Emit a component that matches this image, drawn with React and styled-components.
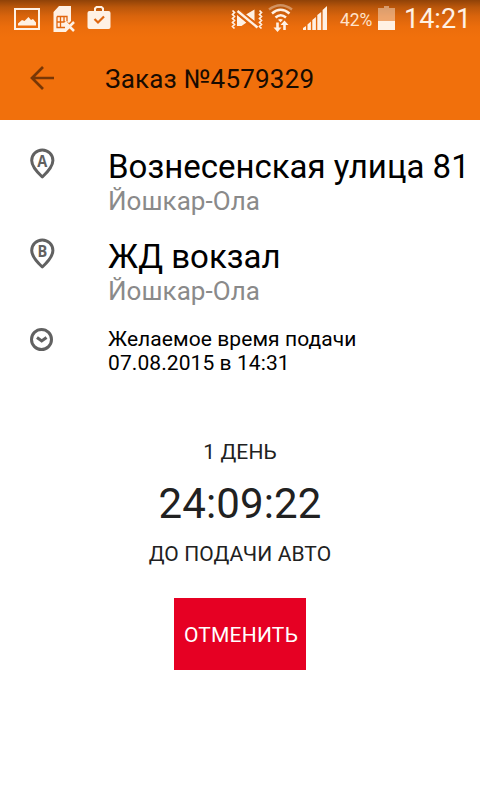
import styled, { createGlobalStyle } from "styled-components";

const GlobalStyle = createGlobalStyle`
  * {
    box-sizing: border-box;
  }

  body {
    margin: 0;
    background-color: #ffffff;
    font-family: Roboto, "Noto Sans", sans-serif;
  }
`;

const Screen = styled.div`
  width: 480px;
  height: 800px;
  overflow: hidden;
  background-color: #ffffff;
`;

const StatusBar = styled.div`
  display: flex;
  justify-content: space-between;
  height: 38px;
  padding: 0 10px 0 13px;
  color: #fff1e4;
  background: linear-gradient(#8f4208 0, #b9560b 7px, #d9640c 16px, #ec6d0c 27px, #f1700c 37px);
`;

const StatusGroup = styled.div`
  display: flex;
  gap: ${(props) => props.$gap || "0"};

  > svg {
    display: block;
    flex: none;
  }
`;

const Percent = styled.span`
  width: 38px;
  margin-left: 11px;
  font-size: 17.5px;
  line-height: 40px;
  letter-spacing: -0.1px;
  color: #ffe3cb;
`;

const Clock = styled.span`
  margin-left: 8px;
  width: 66px;
  font-size: 27px;
  line-height: 38px;
  white-space: nowrap;
`;

const Toolbar = styled.header`
  display: grid;
  grid-template-columns: 105px 1fr;
  align-items: center;
  height: 82px;
  background-color: #f1700c;

  > svg {
    margin-left: 29px;
  }
`;

const Title = styled.h1`
  margin: 0;
  font-size: 26px;
  font-weight: 400;
  line-height: 32px;
  letter-spacing: 0.2px;
  color: #180b01;
`;

const Details = styled.section`
  display: flex;
  flex-direction: column;
  gap: 20px;
  padding-top: 27px;
`;

const Row = styled.div`
  display: grid;
  grid-template-columns: 108px 1fr;

  > svg {
    margin-left: 28px;
  }
`;

const Address = styled.div`
  font-size: 33px;
  line-height: 39px;
  color: #000000;
  white-space: nowrap;
`;

const City = styled.div`
  font-size: 26px;
  line-height: 31px;
  letter-spacing: 0.05px;
  color: #8a8a8a;
`;

const PickupTime = styled.div`
  font-size: 21px;
  line-height: 24px;
  letter-spacing: 0.08px;
  color: #000000;
`;

const Countdown = styled.section`
  display: flex;
  flex-direction: column;
  align-items: center;
  margin-top: 65px;
  color: #212121;
`;

const Caption = styled.div`
  font-size: 21px;
  line-height: 24px;
  letter-spacing: 0.1px;
  text-transform: uppercase;
`;

const Timer = styled.div`
  margin: 15px 0 13px;
  font-size: 42px;
  line-height: 50px;
  letter-spacing: 0.15px;
`;

const CancelButton = styled.button`
  width: 132px;
  height: 72px;
  margin-top: 32px;
  padding: 1px 0 0 2px;
  border: none;
  background-color: #e60023;
  color: #ffffff;
  font-family: inherit;
  font-size: 21px;
  letter-spacing: 0.2px;
  text-transform: uppercase;
  cursor: pointer;
`;

const ImageIcon = () => (
  <svg width="28" height="38" viewBox="13 0 28 38" fill="currentColor">
    <path fillRule="evenodd" d="M14 8h26v22H14zM16 10v18h22v-18z" />
    <path d="M18 25.500v-2l4-3.500 2.500 1 4-4 2.500 3 2-1 3 3.500v3z" />
  </svg>
);

const SimIcon = () => (
  <svg width="24" height="38" viewBox="52 0 24 38">
    <path
      fill="currentColor"
      d="M59 6h12v15l-2 2-2-1-1 2 3 3-3 3v2H53.500V12z"
    />
    <path
      fill="none"
      stroke="#e2660d"
      strokeWidth="1.300"
      d="M57 16.500h10v5M65 27.500h-8v-11M57 22h9M60.500 16.500v11M64 16.500v5"
    />
    <path
      fill="none"
      stroke="currentColor"
      strokeWidth="2.500"
      d="M65 22l9 9M74 22l-9 9"
    />
  </svg>
);

const BagIcon = () => (
  <svg width="24" height="38" viewBox="87 0 24 38">
    <path
      fill="none"
      stroke="currentColor"
      strokeWidth="2"
      d="M95 12V8.500l1.500-1.500h5l1.500 1.500V12"
    />
    <rect x="87.500" y="11" width="23" height="18" rx="2" fill="currentColor" />
    <path
      fill="none"
      stroke="#df660f"
      strokeWidth="2.200"
      d="M94.500 19l3.500 3.500 6-6"
    />
  </svg>
);

const MutedIcon = () => (
  <svg width="36" height="38" viewBox="231 0 36 38">
    <path
      fill="none"
      stroke="currentColor"
      strokeWidth="1.700"
      d="M232.500 10.500l2 2-2 2 2 2-2 2 2 2-2 2 2 2-2 2 2 2M259.500 10.500l2 2-2 2 2 2-2 2 2 2-2 2 2 2-2 2 2 2"
    />
    {/* speaker split by the slash */}
    <path fill="currentColor" d="M237 14.500l9.500 8-5 3.500H237zM246 14.500l8.500-5v11.500z" />
    <path fill="none" stroke="#dd650e" strokeWidth="1.600" d="M240 10.500l18 14.500M237 14l17 14" />
    <path fill="none" stroke="currentColor" strokeWidth="2.400" d="M237.500 11l20 16.500" />
  </svg>
);

const WifiIcon = () => (
  <svg width="36" height="38" viewBox="267 0 36 38">
    <g fill="none" stroke="currentColor" strokeWidth="2.500">
      <path opacity="0.400" d="M269 9.500q11.500-8.500 23 0" />
      <path d="M272 13.500q8.500-7.500 17.500 0" />
      <path d="M275.500 17.500q5.200-4.500 10.500 0" />
    </g>
    <path
      fill="currentColor"
      d="M278 19.800q2.500-1.800 5 0l-2.500 2.500zM276.200 22.500h2.600v5h2.700l-4 4.500-4-4.500h2.700zM283.200 30v-5h-2.700l4-4.500 4 4.500h-2.700v5z"
    />
  </svg>
);

const SignalIcon = () => (
  <svg width="26" height="38" viewBox="303 0 26 38" fill="currentColor">
    <path d="M303 30v-2l3-2v4zM307.500 30v-5.500l3.400-3V30zM312.300 30V20l3.600-3v13zM317.300 30V15l3.900-3v18zM322.600 30v-20l4.400-4v24z" />
  </svg>
);

const BatteryIcon = () => (
  <svg width="18" height="38" viewBox="378 0 18 38" fill="currentColor">
    <path opacity="0.450" d="M378 8h6V6h5v2h6v13h-17z" />
    <path d="M378 21h17v9h-17z" />
  </svg>
);

const BackIcon = () => (
  <svg width="26" height="26" viewBox="29 66 26 26">
    <path
      fill="none"
      stroke="#783706"
      strokeWidth="2.700"
      d="M43 67L32 78l11 11M32 78h22"
    />
  </svg>
);

const PinIcon = ({ letter }) => (
  <svg width="28" height="36" viewBox="0 0 28 36">
    <path
      fill="none"
      stroke="#616161"
      strokeWidth="3"
      strokeLinejoin="round"
      d="M14.300 30C10 26 3.700 20 3.700 13.500a10.600 10.600 0 0 1 21.200 0C24.900 20 18.600 26 14.300 30z"
    />
    <text
      transform="translate(14.300 20) scale(0.880 1)"
      textAnchor="middle"
      fontFamily="Open Sans, Noto Sans, sans-serif"
      fontSize="16.500"
      fontWeight="700"
      fill="#616161"
    >
      {letter}
    </text>
  </svg>
);

const TimeIcon = () => (
  <svg width="28" height="28" viewBox="0 0 28 28" fill="none" stroke="#616161">
    <circle cx="13.500" cy="12.500" r="10" strokeWidth="3" />
    <path strokeWidth="3" d="M9 10.500l4.700 3.500 4.800-3.500" />
  </svg>
);

const route = [
  { letter: "A", address: "Вознесенская улица 81", city: "Йошкар-Ола" },
  { letter: "B", address: "ЖД вокзал", city: "Йошкар-Ола" },
];

const App = () => {
  return (
    <Screen>
      <GlobalStyle />
      <StatusBar>
        <StatusGroup $gap="11px">
          <ImageIcon />
          <SimIcon />
          <BagIcon />
        </StatusGroup>
        <StatusGroup>
          <MutedIcon />
          <WifiIcon />
          <SignalIcon />
          <Percent>42%</Percent>
          <BatteryIcon />
          <Clock>14:21</Clock>
        </StatusGroup>
      </StatusBar>

      <Toolbar>
        <BackIcon />
        <Title>Заказ №4579329</Title>
      </Toolbar>

      <Details>
        {route.map(({ letter, address, city }) => (
          <Row key={letter}>
            <PinIcon letter={letter} />
            <div>
              <Address>{address}</Address>
              <City>{city}</City>
            </div>
          </Row>
        ))}
        <Row>
          <TimeIcon />
          <PickupTime>
            Желаемое время подачи
            <br />
            07.08.2015 в 14:31
          </PickupTime>
        </Row>
      </Details>

      <Countdown>
        <Caption>1 день</Caption>
        <Timer>24:09:22</Timer>
        <Caption>до подачи авто</Caption>
        <CancelButton type="button">Отменить</CancelButton>
      </Countdown>
    </Screen>
  );
};

export default App;
